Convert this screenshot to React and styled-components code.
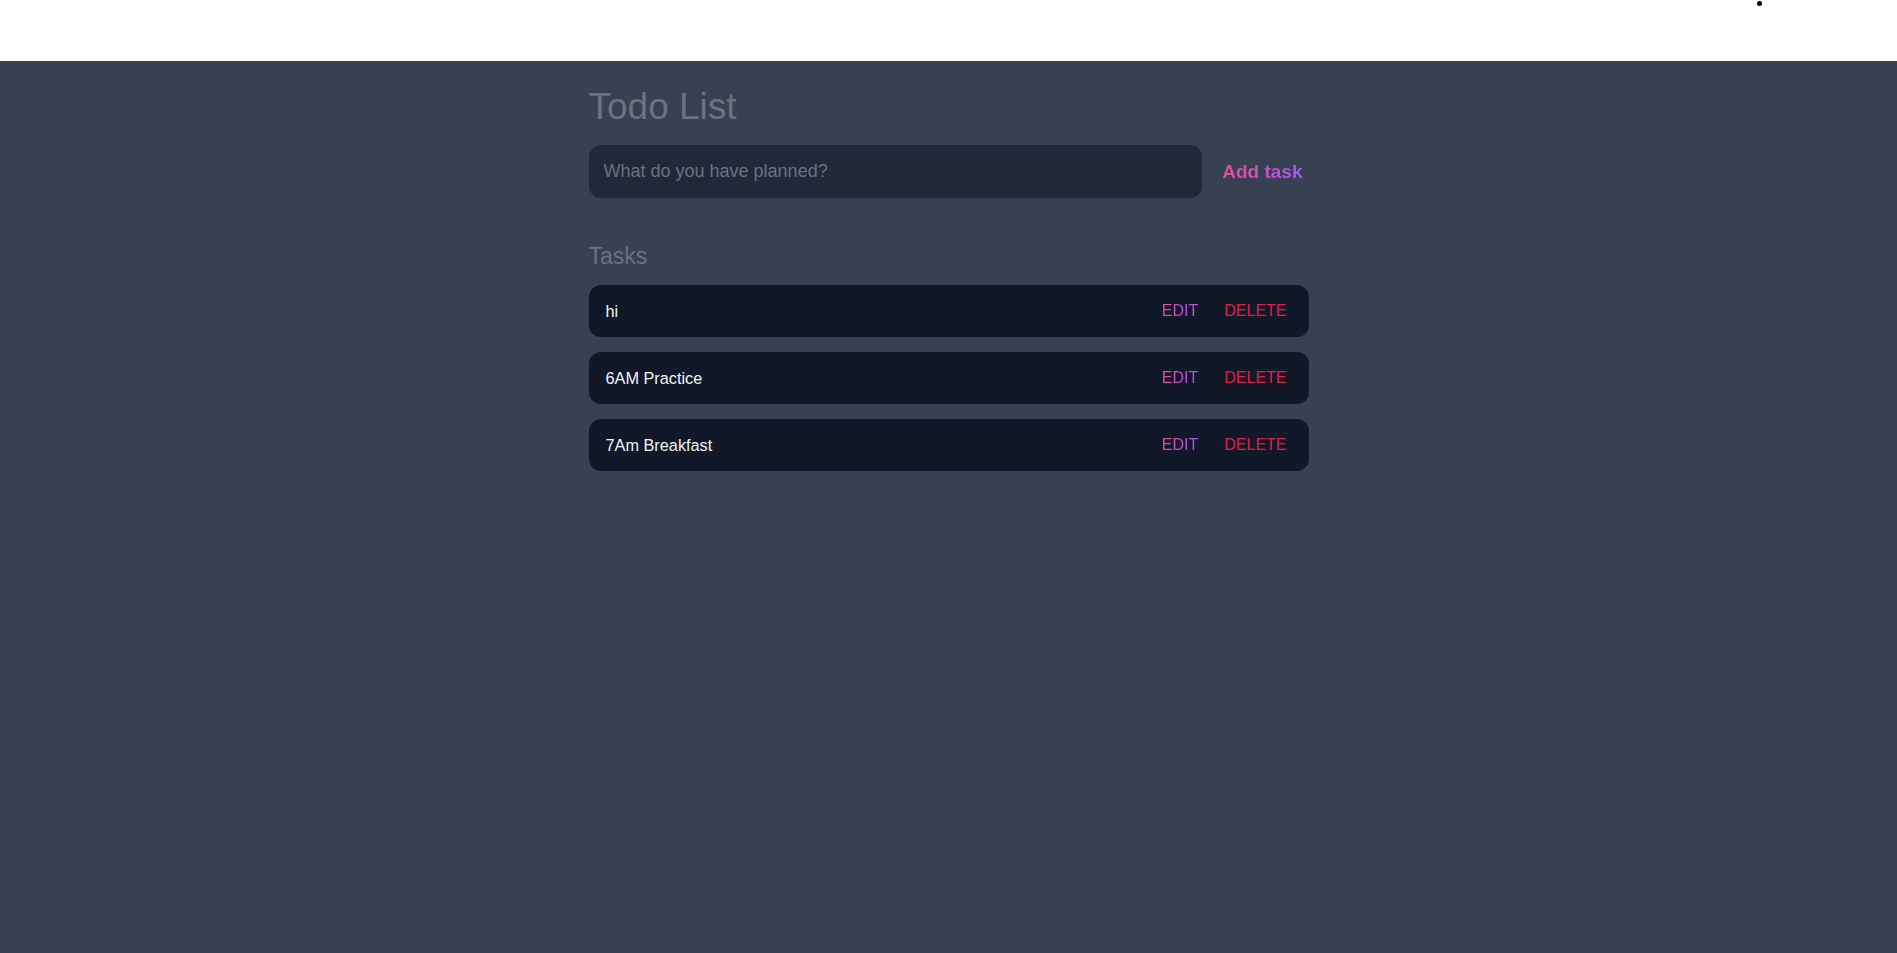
import React, { useState } from 'react';
import styled, { createGlobalStyle } from 'styled-components';

const GlobalStyle = createGlobalStyle`
  html, body {
    margin: 0;
    padding: 0;
    background: #374151;
    font-family: "Liberation Sans", Arial, sans-serif;
  }
  * {
    box-sizing: border-box;
  }
`;

const Page = styled.div`
  min-height: 100vh;
  background: #374151;
  display: flex;
  flex-direction: column;
`;

const TopBar = styled.header`
  height: 61px;
  background: #ffffff;
  display: flex;
  justify-content: flex-end;
  align-items: flex-start;
  padding-right: 135px;
`;

const Bullet = styled.span`
  width: 5px;
  height: 5px;
  margin-top: 1px;
  border-radius: 50%;
  background: #000000;
`;

const Main = styled.main`
  width: 720px;
  margin: 0 auto;
  padding-top: 25px;
  display: flex;
  flex-direction: column;
`;

const Title = styled.h1`
  margin: 0;
  font-size: 37px;
  font-weight: 400;
  color: #6b7280;
`;

const Form = styled.form`
  display: flex;
  align-items: center;
  gap: 20px;
  margin-top: 17px;
`;

const Input = styled.input`
  flex: 1;
  height: 53px;
  padding: 0 15px;
  border: none;
  border-radius: 12px;
  background: #1f2937;
  color: #e5e7eb;
  font-family: inherit;
  font-size: 18px;
  outline: none;
  &::placeholder {
    color: #6b7280;
  }
`;

const GradientText = styled.span`
  background: linear-gradient(to right, #ec4899, #a855f7);
  -webkit-background-clip: text;
  background-clip: text;
  color: transparent;
`;

const AddButton = styled.button`
  border: none;
  background: none;
  padding: 0 6px 0 0;
  font-family: inherit;
  font-size: 19px;
  font-weight: 700;
  cursor: pointer;
`;

const SectionTitle = styled.h2`
  margin: 45px 0 0;
  font-size: 23px;
  font-weight: 400;
  color: #6b7280;
`;

const TaskList = styled.ul`
  list-style: none;
  margin: 15px 0 0;
  padding: 0;
  display: flex;
  flex-direction: column;
  gap: 15px;
`;

const TaskRow = styled.li`
  height: 52px;
  display: flex;
  align-items: center;
  padding: 0 22px 0 17px;
  border-radius: 12px;
  background: #111827;
`;

const TaskText = styled.span`
  flex: 1;
  font-size: 16.3px;
  color: #f3f4f6;
`;

const Actions = styled.div`
  display: flex;
  align-items: center;
  gap: 26px;
`;

const ActionButton = styled.button`
  border: none;
  background: none;
  padding: 0;
  font-family: inherit;
  font-size: 16px;
  color: ${(p) => (p.$danger ? '#e11d48' : 'inherit')};
  cursor: pointer;
`;

export default function App() {
  const [tasks, setTasks] = useState(['hi', '6AM Practice', '7Am Breakfast']);
  const [text, setText] = useState('');

  const handleSubmit = (e) => {
    e.preventDefault();
    if (!text.trim()) return;
    setTasks((prev) => [...prev, text.trim()]);
    setText('');
  };

  return (
    <Page>
      <GlobalStyle />
      <TopBar>
        <Bullet />
      </TopBar>
      <Main>
        <Title>Todo List</Title>
        <Form onSubmit={handleSubmit}>
          <Input
            placeholder="What do you have planned?"
            value={text}
            onChange={(e) => setText(e.target.value)}
          />
          <AddButton type="submit">
            <GradientText>Add task</GradientText>
          </AddButton>
        </Form>
        <SectionTitle>Tasks</SectionTitle>
        <TaskList>
          {tasks.map((t, i) => (
            <TaskRow key={i}>
              <TaskText>{t}</TaskText>
              <Actions>
                <ActionButton>
                  <GradientText>EDIT</GradientText>
                </ActionButton>
                <ActionButton
                  $danger
                  onClick={() => setTasks((prev) => prev.filter((_, j) => j !== i))}
                >
                  DELETE
                </ActionButton>
              </Actions>
            </TaskRow>
          ))}
        </TaskList>
      </Main>
    </Page>
  );
}
